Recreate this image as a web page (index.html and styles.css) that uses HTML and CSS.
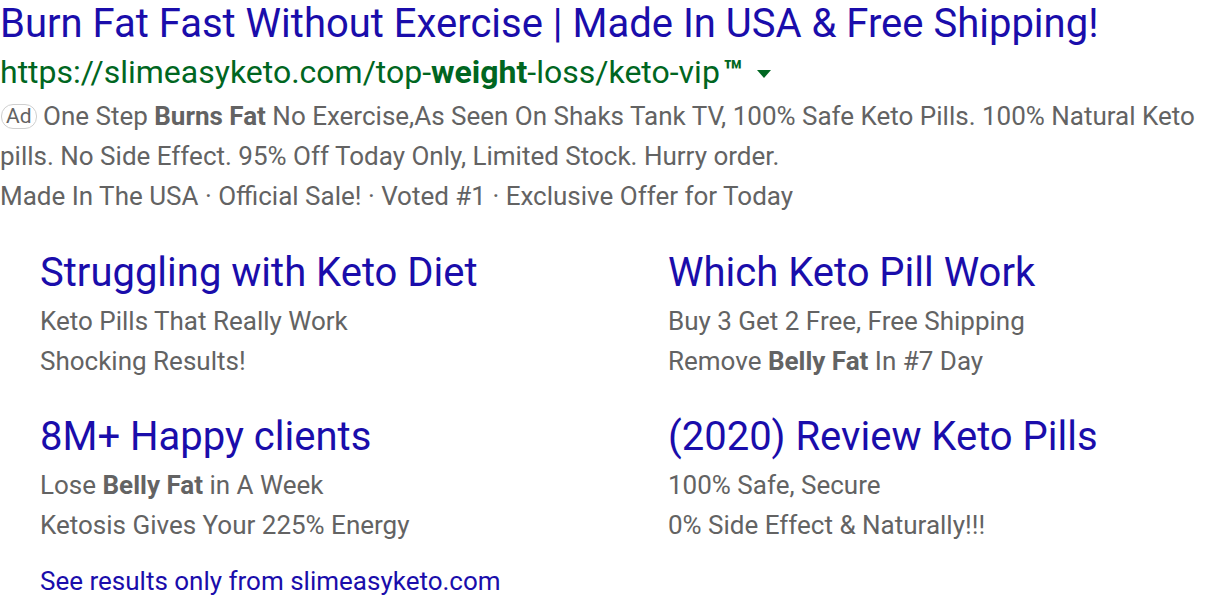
FILE: index.html
```html
<!DOCTYPE html>
<html>
<head>
<meta charset="utf-8">
<link rel="stylesheet" href="styles.css">
</head>
<body>
<div class="ad">
  <div class="title">Burn Fat Fast Without Exercise | Made In USA &amp; Free Shipping!</div>
  <div class="url"><span>https://slimeasyketo.com/top-<b>weight</b>-loss/keto-vip<span class="tm">™</span></span><svg class="caret" width="14" height="8" viewBox="0 0 14 8"><path d="M0 0h14L7 8z" fill="#006621"/></svg></div>
  <div class="desc"><span class="badge">Ad</span> One Step <b>Burns Fat</b> No Exercise,As Seen On Shaks Tank TV, 100% Safe Keto Pills. 100% Natural Keto pills. No Side Effect. 95% Off Today Only, Limited Stock. Hurry order.</div>
  <div class="desc">Made In The USA · Official Sale! · Voted #1 · Exclusive Offer for Today</div>
  <div class="sitelinks">
    <div class="sl">
      <div class="sl-title">Struggling with Keto Diet</div>
      <div class="sl-desc">Keto Pills That Really Work<br>Shocking Results!</div>
    </div>
    <div class="sl">
      <div class="sl-title">Which Keto Pill Work</div>
      <div class="sl-desc">Buy 3 Get 2 Free, Free Shipping<br>Remove <b>Belly Fat</b> In #7 Day</div>
    </div>
    <div class="sl">
      <div class="sl-title">8M+ Happy clients</div>
      <div class="sl-desc">Lose <b>Belly Fat</b> in A Week<br>Ketosis Gives Your 225% Energy</div>
    </div>
    <div class="sl">
      <div class="sl-title">(2020) Review Keto Pills</div>
      <div class="sl-desc">100% Safe, Secure<br>0% Side Effect &amp; Naturally!!!</div>
    </div>
  </div>
  <div class="more">See results only from slimeasyketo.com</div>
</div>
</body>
</html>
```

FILE: styles.css
```css
html, body {
  margin: 0;
  padding: 0;
  background: #fff;
}
body {
  font-family: Roboto, "Liberation Sans", Arial, sans-serif;
  overflow: hidden;
}
.ad {
  width: 1216px;
}
.title {
  color: #1a0dab;
  font-size: 40px;
  line-height: 48px;
  white-space: nowrap;
}
.url {
  color: #006621;
  font-size: 32px;
  line-height: 48px;
  white-space: nowrap;
  display: flex;
  align-items: center;
}
.url b {
  font-weight: 700;
}
.tm {
  font-weight: 700;
  margin-left: 3px;
}
.caret {
  margin-left: 14px;
  margin-top: 4px;
}
.desc {
  color: #636363;
  font-size: 26px;
  line-height: 40px;
  padding-right: 8px;
}
.desc:first-of-type {
  margin-top: 1px;
}
.desc b {
  font-weight: 700;
}
.badge {
  display: inline-block;
  font-size: 21px;
  line-height: 23px;
  padding: 0 4px;
  border: 1px solid #cfcfcf;
  border-radius: 12px;
  color: #636363;
  margin-left: 1px;
  vertical-align: 2px;
}
.sitelinks {
  display: grid;
  grid-template-columns: 628px 548px;
  padding-left: 40px;
  margin-top: 33px;
  row-gap: 32px;
}
.sl-title {
  color: #1a0dab;
  font-size: 40px;
  line-height: 48px;
  white-space: nowrap;
}
.sl-desc {
  color: #636363;
  font-size: 26px;
  line-height: 40px;
  margin-top: 4px;
  white-space: nowrap;
}
.sl-desc b {
  font-weight: 700;
}
.more {
  color: #1a0dab;
  font-size: 26px;
  line-height: 40px;
  padding-left: 40px;
  margin-top: 16px;
}
```
